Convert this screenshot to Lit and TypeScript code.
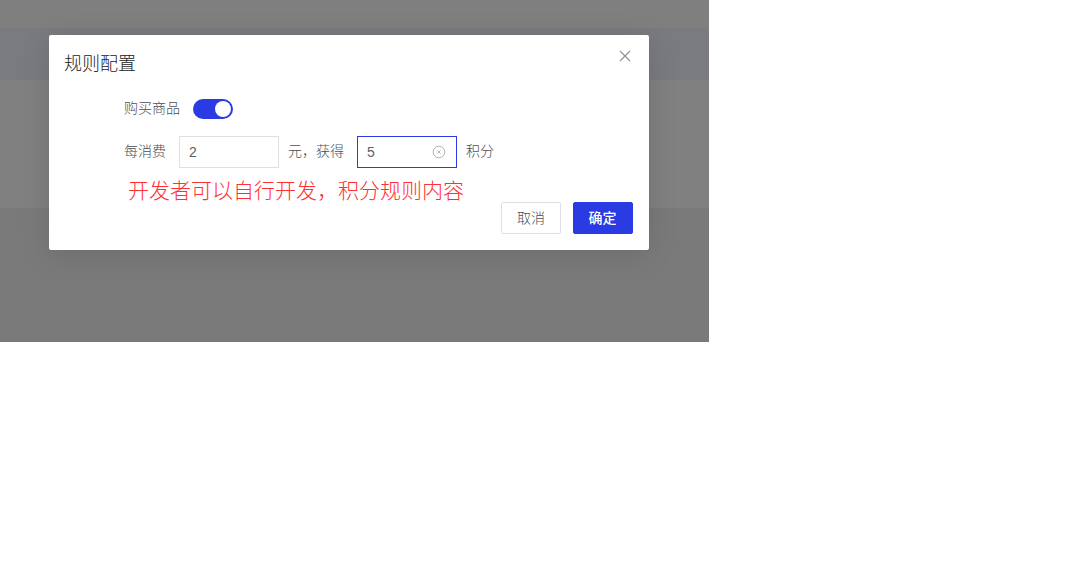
import { LitElement, html, css } from "lit";
import { customElement } from "lit/decorators.js";

@customElement("app-root")
export class AppRoot extends LitElement {
  static styles = css`
    :host { display: block; width: 1090px; height: 576px; background: #fff; font-family: "Noto Sans CJK SC", "Noto Sans", sans-serif; }
    .stage { position: relative; width: 709px; height: 342px; display: flex; flex-direction: column; background: #7f7f7f; overflow: hidden; }
    .b1 { height: 28px; background: #7f7f7f; }
    .b2 { height: 52px; background: #7a7b7e; }
    .b3 { height: 128px; background: #808080; }
    .b4 { flex: 1; background: #7a7a7a; }
    .modal { position: absolute; left: 49px; top: 35px; width: 600px; height: 215px; box-sizing: border-box; background: #fff; border-radius: 2px; box-shadow: 0 4px 30px rgba(0,0,0,.12); padding: 15px 16px 16px 15px; display: flex; flex-direction: column; }
    .title { font-size: 18px; line-height: 24px; color: #222; font-weight: 300; }
    .close { position: absolute; right: 17px; top: 14px; width: 14px; height: 14px; display: block; }
    .body { padding-left: 60px; margin-top: 25px; color: #4c4e54; font-size: 14px; font-weight: 300; display: flex; flex-direction: column; }
    .row { display: flex; align-items: center; }
    .row > span { margin-bottom: 4px; }
    .r1 { height: 20px; margin-bottom: 17px; gap: 13px; }
    .r2 { height: 32px; }
    .switch { position: relative; width: 40px; height: 20px; border-radius: 10px; background: #2a3be3; }
    .knob { position: absolute; right: 2px; top: 2px; width: 16px; height: 16px; border-radius: 50%; background: #fff; }
    .input { box-sizing: border-box; width: 100px; height: 32px; border: 1px solid #dcdfe6; padding: 0 10px 0 9px; display: flex; align-items: center; justify-content: space-between; font-size: 14px; color: #606266; font-family: "Liberation Sans", "Noto Sans", sans-serif; }
    .input.focus { border-color: #2a3be3; }
    .l1 { margin-right: 13px; }
    .l2 { margin: 0 13px 0 9px; }
    .l3 { margin-left: 9px; }
    .note { font-size: 21px; line-height: 28px; color: #ff2f33; font-weight: 300; margin: 7px 0 0 64px; white-space: nowrap; }
    .footer { position: absolute; right: 16px; bottom: 16px; display: flex; gap: 12px; }
    .btn { box-sizing: border-box; width: 60px; height: 32px; padding-bottom: 2px; border-radius: 2px; font-size: 14px; font-weight: 300; display: flex; align-items: center; justify-content: center; border: 1px solid #dcdfe6; color: #4c4e54; background: #fff; }
    .btn.primary { background: #2a3be3; border-color: #2a3be3; color: #fff; font-weight: 500; padding-right: 1px; }
  `;

  render() {
    return html`
      <div class="stage">
        <div class="b1"></div><div class="b2"></div><div class="b3"></div><div class="b4"></div>
        <div class="modal">
          <div class="title">规则配置</div>
          <svg class="close" viewBox="0 0 14 14" fill="none" stroke="#8c8f96" stroke-width="1.1"><path d="M2 2l10 10M12 2L2 12"/></svg>
          <div class="body">
            <div class="row r1"><span>购买商品</span><div class="switch"><div class="knob"></div></div></div>
            <div class="row r2">
              <span class="l1">每消费</span>
              <div class="input">2</div>
              <span class="l2">元，获得</span>
              <div class="input focus">5
                <svg width="14" height="14" viewBox="0 0 14 14" fill="none" stroke="#b4b6bc"><circle cx="7" cy="7" r="5.8"/><path d="M5.4 5.4l3.2 3.2M8.6 5.4l-3.2 3.2"/></svg>
              </div>
              <span class="l3">积分</span>
            </div>
          </div>
          <div class="note">开发者可以自行开发，积分规则内容</div>
          <div class="footer">
            <div class="btn">取消</div>
            <div class="btn primary">确定</div>
          </div>
        </div>
      </div>
    `;
  }
}
